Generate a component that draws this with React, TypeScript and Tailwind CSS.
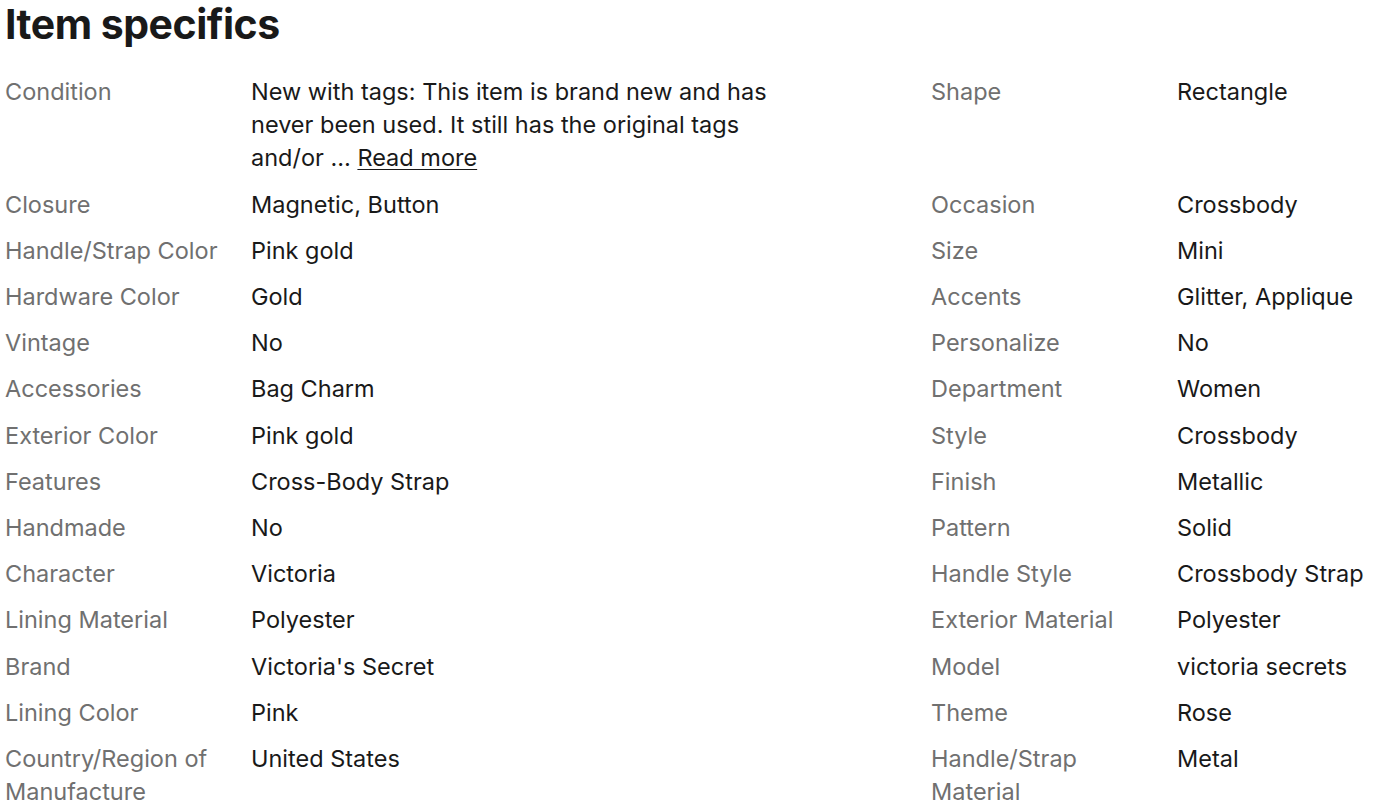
import React from "react";

type Spec = { label: string; value: React.ReactNode };

const left: Spec[] = [
  {
    label: "Condition",
    value: (
      <span className="block max-w-[540px]">
        New with tags: This item is brand new and has never been used. It still has the original tags and/or …{" "}
        <a className="underline underline-offset-[3px] decoration-1 cursor-pointer">Read more</a>
      </span>
    ),
  },
  { label: "Closure", value: "Magnetic, Button" },
  { label: "Handle/Strap Color", value: "Pink gold" },
  { label: "Hardware Color", value: "Gold" },
  { label: "Vintage", value: "No" },
  { label: "Accessories", value: "Bag Charm" },
  { label: "Exterior Color", value: "Pink gold" },
  { label: "Features", value: "Cross-Body Strap" },
  { label: "Handmade", value: "No" },
  { label: "Character", value: "Victoria" },
  { label: "Lining Material", value: "Polyester" },
  { label: "Brand", value: "Victoria's Secret" },
  { label: "Lining Color", value: "Pink" },
  { label: "Country/Region of Manufacture", value: "United States" },
];

const right: Spec[] = [
  { label: "Shape", value: "Rectangle" },
  { label: "Occasion", value: "Crossbody" },
  { label: "Size", value: "Mini" },
  { label: "Accents", value: "Glitter, Applique" },
  { label: "Personalize", value: "No" },
  { label: "Department", value: "Women" },
  { label: "Style", value: "Crossbody" },
  { label: "Finish", value: "Metallic" },
  { label: "Pattern", value: "Solid" },
  { label: "Handle Style", value: "Crossbody Strap" },
  { label: "Exterior Material", value: "Polyester" },
  { label: "Model", value: "victoria secrets" },
  { label: "Theme", value: "Rose" },
  { label: "Handle/Strap Material", value: "Metal" },
];

const Pair = ({ spec }: { spec: Spec }) => (
  <>
    <dt className="text-[#707070] pr-4 pb-[13px]">{spec.label}</dt>
    <dd className="text-[#191919] pb-[13px]">{spec.value}</dd>
  </>
);

export default function App() {
  return (
    <div className="bg-white h-[805px] overflow-hidden pl-[5px] font-['Inter',sans-serif]">
      <h2 className="text-[41px] leading-[48px] font-bold text-[#191919] tracking-[-0.5px]">
        Item specifics
      </h2>
      <dl className="grid grid-cols-[246px_680px_246px_1fr] mt-[27px] text-[23.5px] leading-[33.2px]">
        {left.map((s, i) => (
          <React.Fragment key={s.label}>
            <Pair spec={s} />
            <Pair spec={right[i]} />
          </React.Fragment>
        ))}
      </dl>
    </div>
  );
}
